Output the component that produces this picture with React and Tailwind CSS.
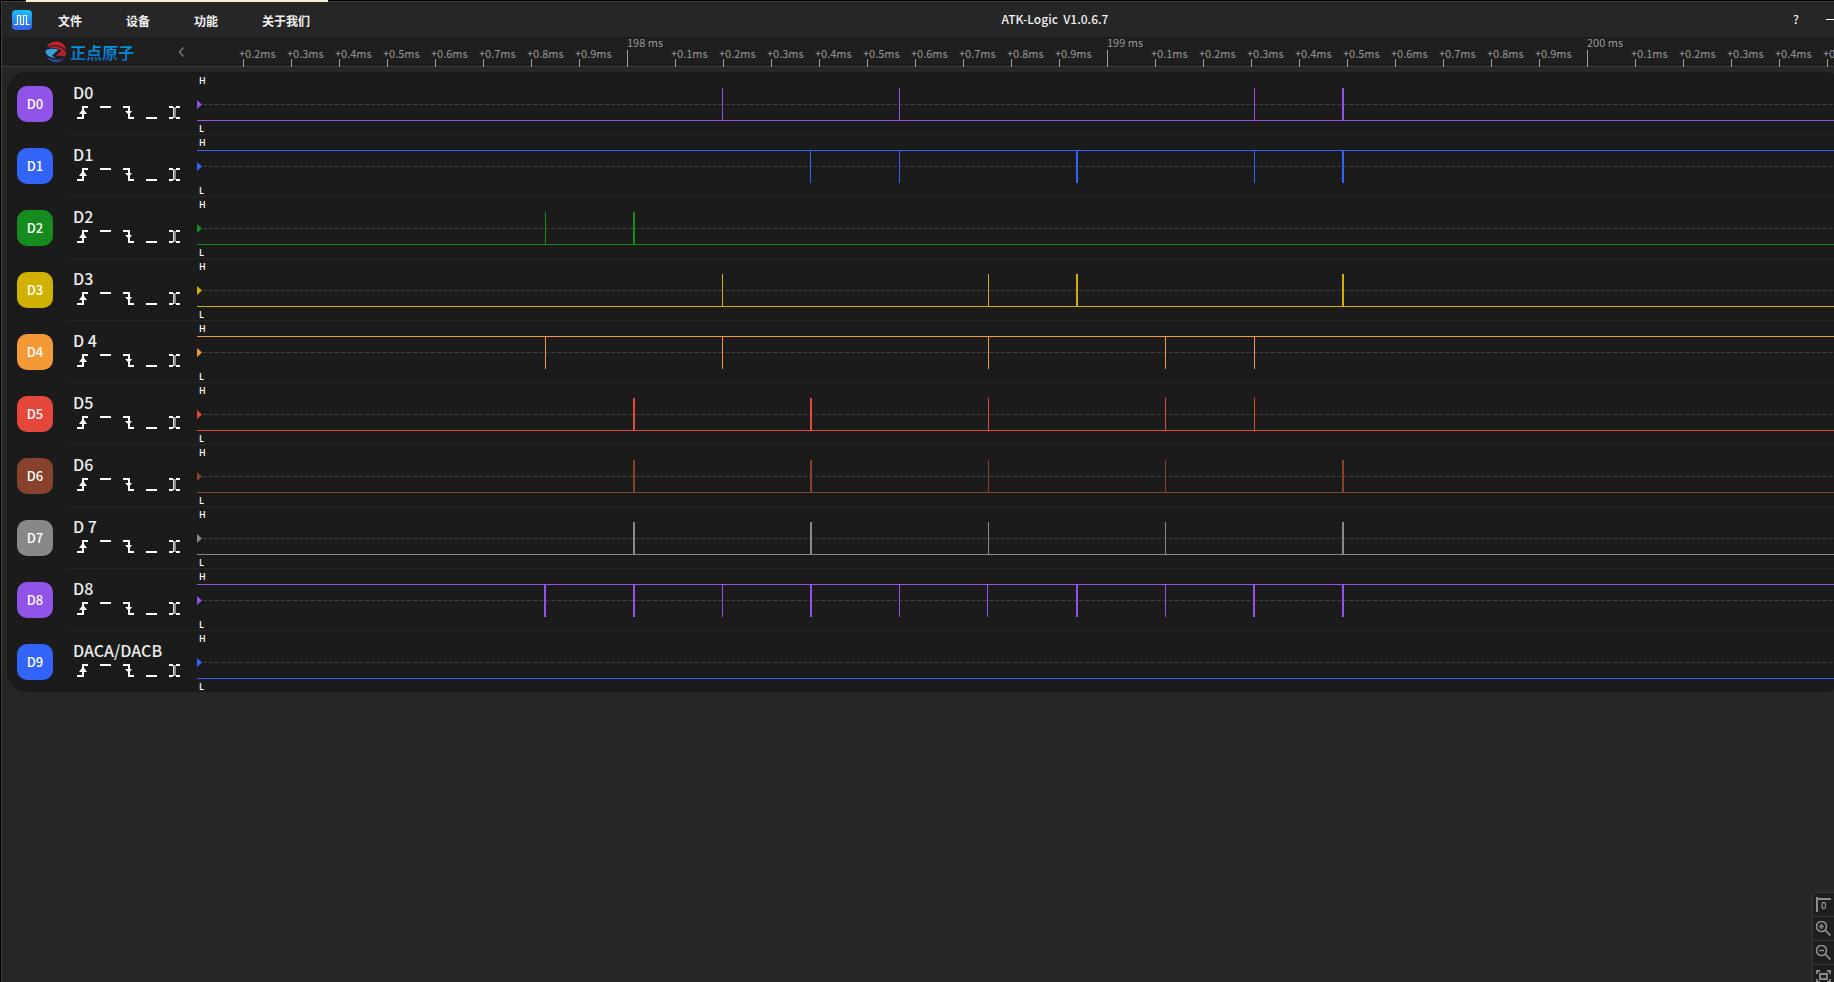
import React from 'react';

const menus = ['文件', '设备', '功能', '关于我们'];

const ticks = Array.from({ length: 34 }, (_, i) => {
  const step = (i + 2) % 10;
  return step === 0
    ? { major: true, label: `${197 + (i + 2) / 10} ms` }
    : { major: false, label: `+0.${step}ms` };
});

// pulses are [x, width] pairs measured from the left edge of the wave area
const channels = [
  { id: 'D0', name: 'D0', color: '#9254e8', idle: 'low', pulses: [[525, 1], [702, 1], [1057, 1], [1145, 2]] },
  { id: 'D1', name: 'D1', color: '#3264fa', idle: 'high', pulses: [[613, 1], [702, 1], [879, 2], [1057, 1], [1145, 2]] },
  { id: 'D2', name: 'D2', color: '#168c1e', idle: 'low', pulses: [[348, 1], [436, 2]] },
  { id: 'D3', name: 'D3', color: '#d1b100', idle: 'low', pulses: [[525, 1], [791, 1], [879, 2], [1145, 2]] },
  { id: 'D4', name: 'D 4', color: '#f39a36', idle: 'high', pulses: [[348, 1], [525, 1], [791, 1], [968, 1], [1057, 1]] },
  { id: 'D5', name: 'D5', color: '#e5483a', idle: 'low', pulses: [[436, 2], [613, 2], [791, 1], [968, 1], [1057, 1]] },
  { id: 'D6', name: 'D6', color: '#88422c', idle: 'low', pulses: [[436, 2], [613, 2], [791, 1], [968, 1], [1145, 2]] },
  { id: 'D7', name: 'D 7', color: '#888888', idle: 'low', pulses: [[436, 2], [613, 2], [791, 1], [968, 1], [1145, 2]] },
  {
    id: 'D8', name: 'D8', color: '#9254e8', idle: 'high',
    pulses: [[347, 2], [436, 2], [525, 1], [613, 2], [702, 1], [790, 1], [879, 2], [968, 1], [1056, 2], [1145, 2]],
  },
  { id: 'D9', name: 'DACA/DACB', color: '#3264fa', idle: 'low', pulses: [] },
];

const triggers = [
  {
    label: 'Rising edge',
    art: <path d="M5 0h6v2H7v2l3 4H7v5H0v-2h5V8H2l3-4z" />,
  },
  { label: 'High level', art: <path d="M0 0h11v2H0z" /> },
  {
    label: 'Falling edge',
    art: <path d="M0 0h7v5h2L6 9 2 5h3V2H0zM5 8h2v3h4v2H5z" />,
  },
  { label: 'Low level', art: <path d="M0 11h11v2H0z" /> },
  {
    label: 'Either edge',
    art: (
      <>
        <path d="M0 0h4v2H0zM7 0h4v2H7zM0 11h4v2H0zM7 11h4v2H7z" />
        <path d="M4 1h3v11H4z" opacity="0.5" />
        <path d="M4 1h1v11H4z" opacity="0.7" />
      </>
    ),
  },
];

const tools = [
  {
    label: 'Go to zero',
    art: (
      <>
        <path d="M1 0v15M0 2h15" strokeWidth="2" />
        <rect x="6" y="5.5" width="3.5" height="6" rx="1.5" strokeWidth="1.3" />
      </>
    ),
  },
  {
    label: 'Zoom in',
    art: <path d="M9.7 9.7L14.5 14.5M5.5 3v5M3 5.5h5M10.5 5.5a5 5 0 1 1-10 0a5 5 0 1 1 10 0z" strokeWidth="1.7" />,
  },
  {
    label: 'Zoom out',
    art: <path d="M9.7 9.7L14.5 14.5M3 5.5h5M10.5 5.5a5 5 0 1 1-10 0a5 5 0 1 1 10 0z" strokeWidth="1.7" />,
  },
  {
    label: 'Fit to window',
    art: <path d="M1 5V2h3M11 2h3v3M14 10v3h-3M4 13H1v-3M4 5h7v5H4z" strokeWidth="1.8" />,
  },
];

const AppIcon = () => (
  <svg className="size-5" viewBox="0 0 20 20" aria-hidden="true">
    <defs>
      <linearGradient id="app-bg" x1="0" y1="0" x2="0" y2="1">
        <stop offset="0" stopColor="#17c0f5" />
        <stop offset="1" stopColor="#3a5cf0" />
      </linearGradient>
    </defs>
    <rect width="20" height="20" rx="4" fill="url(#app-bg)" />
    <path d="M2.5 14.5h3v-9h3v9h3v-9h3v9h3" fill="none" stroke="#fff" strokeWidth="1.2" />
  </svg>
);

const BrandMark = () => (
  <svg className="size-[22px]" viewBox="0 0 22 22" aria-hidden="true">
    <path d="M1.500 6C4 2 8.500 .2 12.500 .6c5 .7 8.500 4.400 8.900 8.900C18 4.500 10 2.500 1.500 6z" fill="#c8202c" />
    <path d="M3 6.800c6-2.800 14-1.600 18 4.200.2 1.800-.3 3.300-1 4.600-3-.9-6-1-9.500-.6l6-5.500c-3.500-2.500-8.500-3.200-13.500-2.700z" fill="#b5222d" />
    <path d="M.5 9.500C3.500 7.600 9 7.200 13.500 8.800L7 14.500c1.500 1.500 3 2.200 5 2.700-3.500 0-7-1-9.500-3C1.200 13 .4 11.200.5 9.500z" fill="#3aa0dc" />
    <path d="M1.500 15c4 4 11 4.500 17.500 2-2 3-5.500 4.700-9 4.300-4-.5-7-2.600-8.500-6.300z" fill="#2c4a9c" />
  </svg>
);

const TitleBar = () => (
  <header className="flex h-[35px] items-center bg-[#262626] pl-[10px] text-xs font-bold text-[#f2f2f2]">
    <AppIcon />
    <nav className="ml-[26px] flex gap-11 pt-0.5">
      {menus.map((menu) => (
        <button key={menu} type="button" className="whitespace-nowrap">{menu}</button>
      ))}
    </nav>
    <h1 className="flex-1 pb-0.5 pl-[10px] text-center font-medium whitespace-pre">ATK-Logic  V1.0.6.7</h1>
    <button type="button" aria-label="Help" className="w-3 pb-0.5 text-center font-medium">?</button>
    <button type="button" aria-label="Minimize" className="-mr-0.5 ml-6 flex h-4 w-[10px] items-center">
      <span className="h-px w-full bg-white" />
    </button>
  </header>
);

const Ruler = () => (
  <div className="flex h-[30px] bg-[#1e1e1e] shadow-[inset_0_-1px_#393939]">
    <div className="flex w-[237px] shrink-0 items-center pl-[43px]">
      <BrandMark />
      <span className="ml-[3px] bg-linear-to-b from-[#00a8f4] to-[#0a66c0] bg-clip-text text-base leading-5 font-bold text-transparent">
        正点原子
      </span>
      <button type="button" aria-label="Collapse" className="ml-11">
        <svg className="h-[10px] w-[7px]" viewBox="0 0 7 10" fill="none" stroke="#6a6a6a" strokeWidth="1.8">
          <path d="M5.500 0.500L1.500 5l4 4.500" />
        </svg>
      </button>
    </div>
    <div className="flex min-w-0 flex-1 text-[11px] leading-3 text-[#999999]">
      {ticks.map((tick, i) => (
        <div key={i} className="flex w-12 shrink-0 flex-col justify-end">
          {tick.major ? (
            <>
              <span className="mb-0.5 ml-1 whitespace-nowrap">{tick.label}</span>
              <span className="ml-1 h-[17px] w-px shrink-0 bg-[#a0a0a0]" />
            </>
          ) : (
            <>
              <span className="whitespace-nowrap">{tick.label}</span>
              <span className="ml-1 h-2 w-px shrink-0 bg-[#a0a0a0]" />
            </>
          )}
        </div>
      ))}
    </div>
  </div>
);

const Wave = ({ channel }) => (
  <div className="grid min-w-0 flex-1">
    <svg className="col-start-1 row-start-1 h-[61px] w-full" shapeRendering="crispEdges" aria-hidden="true">
      <line x1="6" x2="100%" y1="31.5" y2="31.5" stroke="#3d3d3d" strokeDasharray="4 2" />
      <rect y={channel.idle === 'high' ? 15 : 47} width="100%" height="1" fill={channel.color} />
      {channel.pulses.map(([x, w]) => (
        <rect key={x} x={x} y="15" width={w} height="33" fill={channel.color} />
      ))}
      <path d="M0 27l5 4.500L0 36z" fill={channel.color} shapeRendering="auto" />
    </svg>
    <div className="col-start-1 row-start-1 flex flex-col gap-9 pt-0.5 pl-0.5 text-[9px] leading-3 font-medium text-white">
      <span>H</span>
      <span>L</span>
    </div>
  </div>
);

const ChannelRow = ({ channel, first }) => (
  <li className="flex h-[62px] pl-[10px]">
    <button
      type="button"
      className="mt-3.5 size-9 shrink-0 rounded-[10px] text-[13px] font-medium text-white"
      style={{ backgroundColor: channel.color }}
    >
      {channel.id}
    </button>
    <div className={`ml-3.5 flex min-w-0 flex-1 border-t ${first ? 'border-transparent' : 'border-[#262626]'}`}>
      <div className="w-[130px] shrink-0 pt-[7px] pl-1.5">
        <p className="text-base leading-6 font-medium text-[#ebebeb]">{channel.name}</p>
        <div className="mt-0.5 ml-1 flex gap-3">
          {triggers.map((trigger) => (
            <button key={trigger.label} type="button" aria-label={trigger.label}>
              <svg className="block h-[13px] w-[11px]" viewBox="0 0 11 13" fill="#fff">{trigger.art}</svg>
            </button>
          ))}
        </div>
      </div>
      <Wave channel={channel} />
    </div>
  </li>
);

const ZoomTools = () => (
  <div className="absolute right-0 -bottom-1.5 flex flex-col overflow-hidden rounded-tl border-l border-[#38383c] bg-[#1e1e1e]">
    {tools.map((tool) => (
      <button
        key={tool.label}
        type="button"
        aria-label={tool.label}
        className="h-6 border-t border-[#38383c] pr-[3px] pl-[3px]"
      >
        <svg className="block size-[15px]" viewBox="0 0 15 15" fill="none" stroke="#8c8c8c">{tool.art}</svg>
      </button>
    ))}
  </div>
);

const App = () => (
  <div className="relative flex h-screen flex-col overflow-hidden bg-black pl-px font-['Noto_Sans_CJK_SC',sans-serif]">
    <div className="flex h-0.5 shrink-0 border-b border-[#404040] pl-[25px]">
      <div className="h-0.5 w-[302px] bg-[#fbf0cf]" />
    </div>
    <div className="flex-1 border-l border-[#404040] bg-[#262626]">
      <TitleBar />
      <Ruler />
      <main className="mt-[5px] -mr-[11px] ml-[5px] overflow-hidden rounded-[20px] bg-[#1b1b1b]">
        <ul>
          {channels.map((channel, i) => (
            <ChannelRow key={channel.id} channel={channel} first={i === 0} />
          ))}
        </ul>
      </main>
    </div>
    <ZoomTools />
  </div>
);

export default App;
